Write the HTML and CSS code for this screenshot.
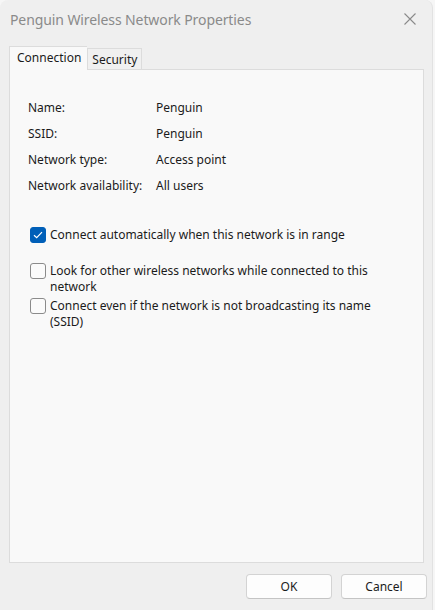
FILE: index.html
```html
<!DOCTYPE html>
<html>
<head>
<meta charset="utf-8">
<link rel="stylesheet" href="styles.css">
</head>
<body>
<div class="window">
  <div class="titlebar">
    <span class="title">Penguin Wireless Network Properties</span>
    <svg class="close" width="12" height="12" viewBox="0 0 12 12"><path d="M0.5 0.5 L11.5 11.5 M11.5 0.5 L0.5 11.5" stroke="#8a8a8a" stroke-width="1.1" fill="none"/></svg>
  </div>
  <div class="tabs">
    <div class="tab active">Connection</div>
    <div class="tab">Security</div>
  </div>
  <div class="panel">
    <div class="props">
      <div class="label">Name:</div><div class="value">Penguin</div>
      <div class="label">SSID:</div><div class="value">Penguin</div>
      <div class="label">Network type:</div><div class="value">Access point</div>
      <div class="label">Network availability:</div><div class="value">All users</div>
    </div>
    <div class="check first">
      <span class="box checked"><svg width="10" height="8" viewBox="0 0 10 8"><path d="M1 4.2 L3.7 6.7 L9 1.2" stroke="#fff" stroke-width="1.2" fill="none"/></svg></span>
      <span class="text">Connect automatically when this network is in range</span>
    </div>
    <div class="check second">
      <span class="box"></span>
      <span class="text">Look for other wireless networks while connected to this network</span>
    </div>
    <div class="check">
      <span class="box"></span>
      <span class="text">Connect even if the network is not broadcasting its name (SSID)</span>
    </div>
  </div>
  <div class="buttons">
    <div class="btn">OK</div>
    <div class="btn">Cancel</div>
  </div>
</div>
</body>
</html>
```
FILE: styles.css
```css
* { box-sizing: border-box; }
html, body { margin: 0; padding: 0; }
body {
  width: 435px;
  height: 610px;
  background: #f6f6f6;
  font-family: "Noto Sans", "Open Sans", sans-serif;
  font-size: 12px;
  color: #1b1b1b;
  overflow: hidden;
}
.window {
  width: 433px;
  height: 610px;
  background: #efefef;
  border-top-left-radius: 8px;
  border-top-right-radius: 8px;
  border-right: 1px solid #e2e2e2;
  display: flex;
  flex-direction: column;
}
.titlebar {
  height: 40px;
  display: flex;
  align-items: center;
  justify-content: space-between;
  padding: 0 16px 2px 10px;
}
.title {
  font-size: 14px;
  color: #8a8a8a;
  letter-spacing: -0.1px;
}
.tabs {
  display: flex;
  align-items: flex-end;
  height: 29px;
  padding-left: 9px;
}
.tab {
  height: 21px;
  padding: 0 4px;
  display: flex;
  align-items: center;
  border: 1px solid #dcdcdc;
  border-bottom: none;
  background: #f0f0f0;
}
.tab.active {
  height: 24px;
  padding: 0 6px 3px 7px;
  background: #f9f9f9;
  border-right: none;
  position: relative;
  z-index: 1;
  margin-bottom: -1px;
}
.panel {
  margin: 0 8px 0 9px;
  height: 494px;
  background: #f9f9f9;
  border: 1px solid #dcdcdc;
  padding: 24px 0 0 18px;
}
.props {
  display: grid;
  grid-template-columns: 128px auto;
  grid-auto-rows: 26px;
  align-items: center;
}
.check {
  display: flex;
  align-items: flex-start;
  gap: 4px;
  padding-left: 2px;
  line-height: 16px;
  margin-bottom: 4px;
}
.check.first { margin-top: 29px; margin-bottom: 20px; }
.check.second { margin-bottom: 3px; }
.check .text { width: 330px; }
.box {
  width: 16px;
  height: 16px;
  flex: none;
  border: 1px solid #8b8b8b;
  border-radius: 3px;
  background: #fbfbfb;
  display: flex;
  align-items: center;
  justify-content: center;
}
.box.checked {
  background: #005fb8;
  border-color: #005fb8;
}
.buttons {
  display: flex;
  justify-content: flex-end;
  gap: 9px;
  padding: 11px 5px 0 0;
}
.btn {
  width: 86px;
  height: 25px;
  background: #fdfdfd;
  border: 1px solid #d3d3d3;
  border-bottom-color: #c4c4c4;
  border-radius: 4px;
  display: flex;
  align-items: center;
  justify-content: center;
}
```
